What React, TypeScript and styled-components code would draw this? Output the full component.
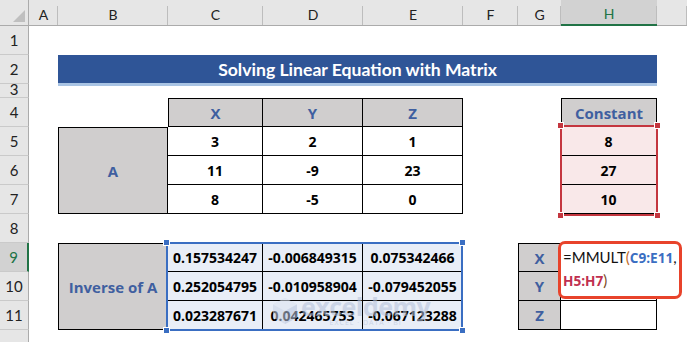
import React from 'react'
import styled, { createGlobalStyle, css } from 'styled-components'

const GlobalStyle = createGlobalStyle`
  html, body { margin: 0; padding: 0; background: #fff; }
  body { font-family: 'Open Sans', 'Liberation Sans', sans-serif; }
`

const COLS = ['A', 'B', 'C', 'D', 'E', 'F', 'G', 'H']
const MATRIX_A = [
    [3, 2, 1],
    [11, -9, 23],
    [8, -5, 0],
]
const INVERSE = [
    ['0.157534247', '-0.006849315', '0.075342466'],
    ['0.252054795', '-0.010958904', '-0.079452055'],
    ['0.023287671', '0.042465753', '-0.067123288'],
]
const CONSTANTS = [8, 27, 10]

type Place = { $c: number; $r: number; $cs?: number; $rs?: number }

const place = css<Place>`
  grid-column: ${p => p.$c} / span ${p => p.$cs ?? 1};
  grid-row: ${p => p.$r} / span ${p => p.$rs ?? 1};
`

function App() {
    return (
        <>
            <GlobalStyle />
            <Sheet>
                <Corner />
                {COLS.map((c, i) => (
                    <ColHead key={c} $c={i + 2} $active={c === 'H'}>{c}</ColHead>
                ))}
                <ColHead $c={10} />
                {Array.from({ length: 12 }, (_, i) => (
                    <RowHead key={i} $r={i + 2} $active={i + 1 === 9} $short={i + 1 === 3}>
                        {/* row 12 sits below the fold, its number isn't visible */}
                        {i + 1 < 12 ? i + 1 : ''}
                    </RowHead>
                ))}

                <Title $c={3} $r={3} $cs={7}>Solving Linear Equation with Matrix</Title>

                {/* matrix A */}
                {['X', 'Y', 'Z'].map((v, i) => (
                    <Head key={v} $c={4 + i} $r={5} $t $l={i === 0}>{v}</Head>
                ))}
                <Head $c={3} $r={6} $rs={3} $t $l>A</Head>
                {MATRIX_A.map((row, ri) =>
                    row.map((v, ci) => (
                        <Cell key={`a${ri}${ci}`} $c={4 + ci} $r={6 + ri}>{v}</Cell>
                    ))
                )}

                {/* constants */}
                <Head $c={9} $r={5} $t $l>Constant</Head>
                {CONSTANTS.map((v, i) => (
                    <Cell key={`k${i}`} $c={9} $r={6 + i} $fill="#F9E8E9">{v}</Cell>
                ))}
                <Selection $c={9} $r={6} $rs={3} $tone="#C4363F" $m="-2px -1px -2px -1px">
                    <Handle $tone="#C4363F" $x="left" $y="top" />
                    <Handle $tone="#C4363F" $x="right" $y="top" />
                    <Handle $tone="#C4363F" $x="left" $y="bottom" />
                    <Handle $tone="#C4363F" $x="right" $y="bottom" />
                </Selection>

                {/* inverse */}
                <Head $c={3} $r={10} $rs={3} $t $l>Inverse of A</Head>
                {INVERSE.map((row, ri) =>
                    row.map((v, ci) => (
                        <Cell key={`i${ri}${ci}`} $c={4 + ci} $r={10 + ri} $t={ri === 0} $fill="#E9EEF7">
                            {v}
                        </Cell>
                    ))
                )}
                <Selection $c={4} $r={10} $cs={3} $rs={3} $tone="#3A6EC2" $m="-1px 0 -1px -2px">
                    <Handle $tone="#3A6EC2" $x="left" $y="top" />
                    <Handle $tone="#3A6EC2" $x="right" $y="top" />
                    <Handle $tone="#3A6EC2" $x="left" $y="bottom" />
                    <Handle $tone="#3A6EC2" $x="right" $y="bottom" />
                </Selection>

                {/* result */}
                {['X', 'Y', 'Z'].map((v, i) => (
                    <Head key={`r${v}`} $c={8} $r={10 + i} $t={i === 0} $l>{v}</Head>
                ))}
                {[0, 1, 2].map(i => (
                    <Cell key={`h${i}`} $c={9} $r={10 + i} $t={i === 0} />
                ))}
                <FormulaBox $c={9} $r={10} $cs={2} $rs={2}>
                    =MMULT<Paren>(</Paren><Ref $tone="#3A6EC2">C9:E11</Ref>,
                    <br />
                    <Ref $tone="#C0304F">H5:H7</Ref><Paren $dark>)</Paren>
                </FormulaBox>

                <Watermark>
                    <svg width="26" height="28" viewBox="0 0 26 28">
                        <path d="M13 1 L25 7.5 L25 20.5 L13 27 L1 20.5 L1 7.5 Z" fill="#C9D3E6" />
                        <path d="M13 1 L25 7.5 L13 14 L1 7.5 Z" fill="#DDE4F0" />
                        <path d="M13 14 L25 7.5 L25 20.5 L13 27 Z" fill="#B7C4DD" />
                    </svg>
                    <MarkText>
                        <MarkName>exceldemy</MarkName>
                        <MarkTag>EXCEL · DATA · BI</MarkTag>
                    </MarkText>
                </Watermark>
            </Sheet>
        </>
    )
}

const Sheet = styled.div`
position: relative;
display: grid;
grid-template-columns: 29px 29px 110px 95px 100px 100px 55px 43px 96px 1fr;
grid-template-rows: 26px 29px 29px 14px repeat(9, 29px);
width: 687px;
height: 342px;
overflow: hidden;
background: #fff;
`

const Corner = styled.div`
grid-column: 1;
grid-row: 1;
position: relative;
background: #E6E6E6;
border-right: 1px solid #ABABAB;
border-bottom: 1px solid #ABABAB;
&::before {
  content: '';
  position: absolute;
  right: 3px;
  bottom: 3px;
  border-left: 12px solid transparent;
  border-bottom: 12px solid #BFBFBF;
}
`

const ColHead = styled.div<{ $c: number; $active?: boolean }>`
grid-column: ${p => p.$c};
grid-row: 1;
position: relative;
display: flex;
align-items: center;
justify-content: center;
padding-top: 3px;
background: ${p => (p.$active ? '#D2D2D2' : '#E6E6E6')};
border-bottom: ${p => (p.$active ? '2px solid #217346' : '1px solid #ABABAB')};
color: ${p => (p.$active ? '#217346' : '#222')};
font-family: Lato, 'Open Sans', sans-serif;
font-size: 14px;
&::after {
  content: '';
  position: absolute;
  right: 0;
  top: 6px;
  bottom: 0;
  width: 1px;
  background: #BDBDBD;
}
`

const RowHead = styled.div<{ $r: number; $active?: boolean; $short?: boolean }>`
grid-column: 1;
grid-row: ${p => p.$r};
display: flex;
align-items: ${p => (p.$short ? 'flex-end' : 'center')};
justify-content: center;
overflow: hidden;
line-height: ${p => (p.$short ? '16px' : 'normal')};
background: ${p => (p.$active ? '#D2D2D2' : '#E6E6E6')};
border-bottom: 1px solid #CACACA;
border-right: ${p => (p.$active ? '2px solid #217346' : '1px solid #ABABAB')};
color: ${p => (p.$active ? '#217346' : '#222')};
font-family: Lato, 'Open Sans', sans-serif;
font-size: 15px;
`

const Title = styled.div<Place>`
${place}
display: flex;
align-items: center;
justify-content: center;
margin-bottom: -2px;
background: #2F5597;
border-bottom: 3px solid #A9C4E4;
color: #fff;
font-family: Lato, 'Open Sans', sans-serif;
font-weight: 700;
font-size: 17.6px;
`

const Cell = styled.div<Place & { $t?: boolean; $l?: boolean; $fill?: string }>`
${place}
box-sizing: border-box;
display: flex;
align-items: center;
justify-content: center;
background: ${p => p.$fill ?? '#fff'};
border-right: 1px solid #000;
border-bottom: 1px solid #000;
border-top: ${p => (p.$t ? '1px solid #000' : 'none')};
border-left: ${p => (p.$l ? '1px solid #000' : 'none')};
color: #000;
font-family: 'Open Sans', sans-serif;
font-weight: 700;
font-size: 14px;
`

const Head = styled(Cell)`
background: #D0CECE;
color: #3F5FA0;
font-size: 15px;
`

const Selection = styled.div<Place & { $tone: string; $m: string }>`
${place}
position: relative;
z-index: 2;
margin: ${p => p.$m};
border: 2px solid ${p => p.$tone};
pointer-events: none;
`

const Handle = styled.span<{ $tone: string; $x: 'left' | 'right'; $y: 'top' | 'bottom' }>`
position: absolute;
${p => p.$x}: -4px;
${p => p.$y}: -4px;
width: 5px;
height: 5px;
background: ${p => p.$tone};
box-shadow: 0 0 0 1px #fff;
`

const FormulaBox = styled.div<Place>`
${place}
position: relative;
z-index: 3;
margin: -2px 5px 2px -3px;
padding: 2px 0 0 2px;
border: 3px solid #E8432B;
border-radius: 7px;
background: #fff;
color: #111;
font-family: Lato, 'Open Sans', sans-serif;
font-size: 15px;
line-height: 23px;
white-space: nowrap;
overflow: hidden;
`

const Ref = styled.span<{ $tone: string }>`
color: ${p => p.$tone};
font-family: 'Open Sans', sans-serif;
font-weight: 700;
font-size: 13.6px;
`

const Paren = styled.span<{ $dark?: boolean }>`
color: ${p => (p.$dark ? '#7A4A1C' : '#C06A1E')};
`

const Watermark = styled.div`
position: absolute;
left: 272px;
top: 294px;
z-index: 1;
display: flex;
align-items: center;
gap: 3px;
opacity: 0.55;
pointer-events: none;
`

const MarkText = styled.div`
display: flex;
flex-direction: column;
align-items: center;
`

const MarkName = styled.span`
color: #B3C0D9;
font-family: 'Open Sans', sans-serif;
font-weight: 700;
font-size: 25px;
line-height: 24px;
letter-spacing: -0.5px;
`

const MarkTag = styled.span`
color: #B3C0D9;
font-family: 'Open Sans', sans-serif;
font-size: 7px;
letter-spacing: 1px;
`

export default App
